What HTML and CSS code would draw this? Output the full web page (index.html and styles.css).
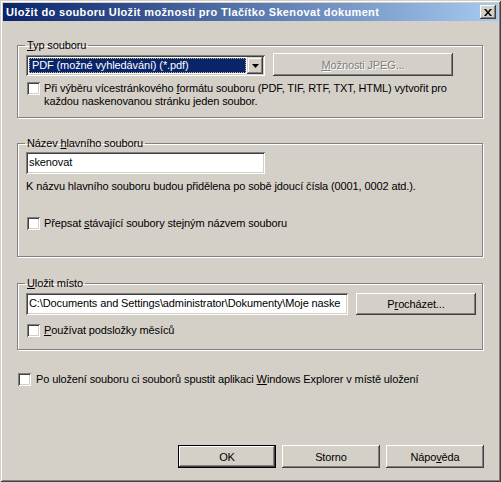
FILE: index.html
```html
<!DOCTYPE html>
<html lang="cs">

<head>
    <meta charset="UTF-8">
    <meta name="viewport" content="width=device-width, initial-scale=1.0">
    <title>Uložit do souboru</title>
    <link rel="stylesheet" href="styles.css">
</head>

<body>
    <div class="window">
        <div class="titlebar">
            <span class="title">Uložit do souboru Uložit možnosti pro Tlačítko Skenovat dokument</span>
            <span class="close-btn">
                <svg width="8" height="7" viewBox="0 0 8 7">
                    <path d="M0 0h2l2 2.5 2-2.5h2l-3 3.5 3 3.5h-2l-2-2.5-2 2.5h-2l3-3.5z" fill="#000"/>
                </svg>
            </span>
        </div>

        <div class="client">
            <fieldset class="group group-type">
                <legend><u>T</u>yp souboru</legend>
                <div class="row">
                    <div class="combo">
                        <div class="combo-value"><span>PDF (možné vyhledávání) (*.pdf)</span></div>
                        <div class="combo-arrow">
                            <svg width="7" height="4" viewBox="0 0 7 4"><path d="M0 0h7l-3.5 4z" fill="#000"/></svg>
                        </div>
                    </div>
                    <button class="btn btn-jpeg" disabled><u>M</u>ožnosti JPEG...</button>
                </div>
                <label class="check check-multi">
                    <span class="box"></span>
                    <span>Při výběru vícestránkového <u>f</u>ormátu souboru (PDF, TIF, RTF, TXT, HTML) vytvořit pro<br>každou naskenovanou stránku jeden soubor.</span>
                </label>
            </fieldset>

            <fieldset class="group group-name">
                <legend>Název <u>h</u>lavního souboru</legend>
                <div class="field field-name">skenovat</div>
                <p class="hint">K názvu hlavního souboru budou přidělena po sobě jdoucí čísla (0001, 0002 atd.).</p>
                <label class="check check-overwrite">
                    <span class="box"></span>
                    <span>Přepsat <u>s</u>távající soubory stejným názvem souboru</span>
                </label>
            </fieldset>

            <fieldset class="group group-place">
                <legend><u>U</u>ložit místo</legend>
                <div class="row row-path">
                    <div class="field field-path">C:\Documents and Settings\administrator\Dokumenty\Moje naske</div>
                    <button class="btn btn-browse">P<u>r</u>ocházet...</button>
                </div>
                <label class="check check-months">
                    <span class="box"></span>
                    <span><u>P</u>oužívat podsložky měsíců</span>
                </label>
            </fieldset>

            <label class="check check-explorer">
                <span class="box"></span>
                <span>Po uložení souboru ci souborů spustit aplikaci <u>W</u>indows Explorer v místě uložení</span>
            </label>

            <div class="footer">
                <button class="btn btn-default">OK</button>
                <button class="btn">Storno</button>
                <button class="btn">Nápo<u>v</u>ěda</button>
            </div>
        </div>
    </div>
</body>

</html>
```

FILE: styles.css
```css
/* General styles */
* {
    box-sizing: border-box;
}

body {
    margin: 0;
    padding: 0;
    background-color: #d4d0c8;
    font-family: "Liberation Sans", Arial, sans-serif;
    font-size: 11px;
    line-height: 13px;
    letter-spacing: -0.12px;
    color: #000;
}

u {
    text-decoration: underline;
    text-underline-offset: 1px;
}

/* Window frame */
.window {
    width: 501px;
    height: 482px;
    padding: 3px;
    display: flex;
    flex-direction: column;
    background-color: #d4d0c8;
    box-shadow: inset 1px 1px #d4d0c8, inset -1px -1px #404040,
        inset 2px 2px #ffffff, inset -2px -2px #808080;
}

.titlebar {
    height: 18px;
    display: flex;
    align-items: center;
    justify-content: space-between;
    padding: 0 2px 0 3px;
    background: linear-gradient(to right, #0a246a, #a6caf0);
}

.title {
    color: #ffffff;
    font-weight: bold;
    font-size: 11px;
    letter-spacing: 0.35px;
    white-space: nowrap;
}

.close-btn {
    width: 16px;
    height: 14px;
    display: flex;
    align-items: center;
    justify-content: center;
    background-color: #d4d0c8;
    box-shadow: inset -1px -1px #404040, inset 1px 1px #ffffff,
        inset -2px -2px #808080;
}

.close-btn svg {
    margin-left: -1px;
}

.client {
    flex: 1;
    display: flex;
    flex-direction: column;
    padding: 0 0 11px 0;
}

/* Group boxes */
.group {
    margin: 0 15px 0 14px;
    padding: 0 6px 0 8px;
    border: 1px solid #808080;
    box-shadow: inset 1px 1px #ffffff, 1px 1px #ffffff;
    min-width: 0;
}

.group legend {
    padding: 0 2px 0 2px;
    margin-left: -1px;
    line-height: 13px;
}

.group-type {
    margin-top: 18px;
    padding-top: 1px;
    padding-bottom: 9px;
}

.group-name {
    margin-top: 19px;
    padding-top: 2px;
    padding-bottom: 26px;
}

.group-place {
    margin-top: 20px;
    padding-top: 3px;
    padding-bottom: 12px;
}

.row {
    display: flex;
    align-items: flex-end;
    gap: 8px;
}

/* Sunken controls */
.combo,
.field,
.box {
    background-color: #ffffff;
    box-shadow: inset 1px 1px #808080, inset -1px -1px #ffffff,
        inset 2px 2px #404040, inset -2px -2px #d4d0c8;
}

.combo {
    width: 239px;
    height: 21px;
    padding: 2px;
    display: flex;
}

.combo-value {
    flex: 1;
    margin: 1px;
    padding: 0 2px;
    background-color: #0a246a;
    color: #ffffff;
    border: 1px dotted #c8b888;
    display: flex;
    align-items: center;
    white-space: nowrap;
    overflow: hidden;
}

.combo-arrow {
    width: 16px;
    height: 17px;
    display: flex;
    align-items: center;
    justify-content: center;
    background-color: #d4d0c8;
    box-shadow: inset -1px -1px #404040, inset 1px 1px #d4d0c8,
        inset -2px -2px #808080, inset 2px 2px #ffffff;
}

.field {
    height: 22px;
    padding: 4px 3px 0 3px;
    white-space: nowrap;
    overflow: hidden;
}

.field-name {
    width: 239px;
}

.field-path {
    width: 322px;
}

.hint {
    margin: 6px 0 0 0;
}

/* Buttons */
.btn {
    font-family: inherit;
    font-size: 11px;
    letter-spacing: inherit;
    color: #000;
    height: 23px;
    padding: 0;
    border: none;
    background-color: #d4d0c8;
    box-shadow: inset -1px -1px #404040, inset 1px 1px #ffffff,
        inset -2px -2px #808080;
}

.btn:disabled {
    color: #808080;
    text-shadow: 1px 1px #ffffff;
}

.btn-jpeg {
    width: 180px;
}

.btn-browse {
    width: 120px;
    height: 22px;
}

.btn-default {
    box-shadow: inset 0 0 0 1px #000, inset -2px -2px #404040,
        inset 2px 2px #ffffff, inset -3px -3px #808080;
}

/* Checkboxes */
.check {
    display: flex;
    align-items: flex-start;
    gap: 4px;
}

.box {
    flex: none;
    width: 13px;
    height: 13px;
    margin-left: 1px;
}

.check-multi {
    margin-top: 6px;
}

.check-overwrite {
    margin-top: 24px;
}

.check-months {
    margin-top: 9px;
}

.check-explorer {
    margin: 23px 0 0 14px;
    gap: 5px;
}

.footer {
    margin-top: auto;
    display: flex;
    justify-content: flex-end;
    gap: 6px;
    padding-right: 14px;
}

.footer .btn {
    width: 98px;
}
```
